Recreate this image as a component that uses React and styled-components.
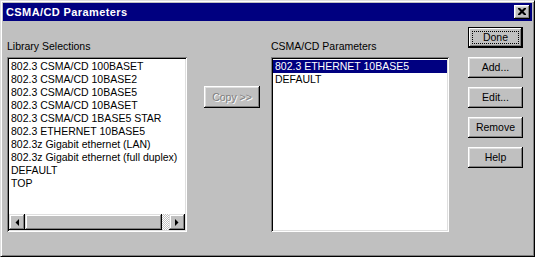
import React from 'react';
import styled, { createGlobalStyle } from 'styled-components';

const GlobalStyle = createGlobalStyle`
  html, body {
    margin: 0;
    padding: 0;
    background: #c0c0c0;
  }
  body {
    font-family: "Liberation Sans", Arial, sans-serif;
    font-size: 10.5px;
    color: #000;
  }
`;

const Window = styled.div`
  width: 535px;
  height: 257px;
  box-sizing: border-box;
  background: #c0c0c0;
  border: 1px solid;
  border-color: #dfdfdf #000 #000 #dfdfdf;
  box-shadow: inset 1px 1px #fff, inset -1px -1px #808080;
  padding: 2px;
  display: flex;
  flex-direction: column;
`;

const TitleBar = styled.div`
  height: 18px;
  background: #000080;
  color: #fff;
  display: flex;
  align-items: center;
  justify-content: space-between;
  padding: 0 2px 0 3px;
  font-weight: bold;
  font-size: 11px;
  letter-spacing: 0.4px;
`;

const CloseButton = styled.div`
  width: 16px;
  height: 14px;
  box-sizing: border-box;
  background: #c0c0c0;
  box-shadow: inset -1px -1px #000, inset 1px 1px #fff, inset -2px -2px #808080, inset 2px 2px #dfdfdf;
  display: flex;
  align-items: center;
  justify-content: center;
  padding: 0 1px 1px 0;
`;

const Content = styled.div`
  flex: 1;
  display: flex;
  padding-left: 4px;
`;

const Column = styled.div`
  width: ${(p) => p.$width}px;
  margin-left: ${(p) => p.$gap || 0}px;
  padding-top: ${(p) => p.$top || 0}px;
  display: flex;
  flex-direction: column;
`;

const Label = styled.div`
  height: 13px;
  line-height: 13px;
  margin-top: 19px;
  margin-bottom: 4px;
  white-space: nowrap;
`;

const ListBox = styled.div`
  height: 175px;
  box-sizing: border-box;
  background: #fff;
  box-shadow: inset 1px 1px #808080, inset -1px -1px #fff, inset 2px 2px #000, inset -2px -2px #dfdfdf;
  padding: 3px 2px 2px 2px;
  display: flex;
  flex-direction: column;
`;

const Items = styled.div`
  flex: 1;
  overflow: hidden;
`;

const Item = styled.div`
  height: 13px;
  line-height: 13px;
  padding-left: ${(p) => (p.$pad ? p.$pad : 2)}px;
  white-space: nowrap;
  background: ${(p) => (p.$selected ? '#000080' : 'transparent')};
  color: ${(p) => (p.$selected ? '#fff' : '#000')};
`;

const ScrollBar = styled.div`
  height: 16px;
  display: flex;
`;

const Arrow = styled.div`
  width: 16px;
  height: 16px;
  box-sizing: border-box;
  background: #c0c0c0;
  box-shadow: inset -1px -1px #000, inset 1px 1px #dfdfdf, inset -2px -2px #808080, inset 2px 2px #fff;
  display: flex;
  align-items: center;
  justify-content: center;
`;

const Thumb = styled(Arrow)`
  width: auto;
  flex: 1;
`;

const Track = styled.div`
  width: 7px;
  background: repeating-conic-gradient(#c0c0c0 0 25%, #fff 0 50%) 0 0 / 2px 2px;
`;

const Button = styled.div`
  position: relative;
  width: ${(p) => p.$width || 55}px;
  height: ${(p) => p.$height || 21}px;
  box-sizing: border-box;
  background: #c0c0c0;
  box-shadow: ${(p) =>
    p.$default
      ? 'inset 0 0 0 1px #000, inset -2px -2px #000, inset 2px 2px #fff, inset -3px -3px #808080'
      : 'inset -1px -1px #000, inset 1px 1px #fff, inset -2px -2px #808080, inset 2px 2px #dfdfdf'};
  display: flex;
  align-items: center;
  justify-content: center;
  padding-bottom: 1px;
  margin-bottom: ${(p) => p.$after || 0}px;
  color: ${(p) => (p.$disabled ? '#808080' : '#000')};
  text-shadow: ${(p) => (p.$disabled ? '1px 1px #fff' : 'none')};
  flex-shrink: 0;
`;

const FocusRing = styled.span`
  position: absolute;
  inset: 4px;
  border: 1px dotted #000;
`;

const ButtonText = styled.span`
  position: relative;
`;

const ArrowGlyph = ({ dir }) => (
  <svg width="4" height="7" viewBox="0 0 4 7">
    {dir === 'left' ? (
      <path d="M4 0 L4 7 L0.5 3.5 Z" fill="#000" />
    ) : (
      <path d="M0 0 L0 7 L3.5 3.5 Z" fill="#000" />
    )}
  </svg>
);

const libraryItems = [
  '802.3 CSMA/CD 100BASET',
  '802.3 CSMA/CD 10BASE2',
  '802.3 CSMA/CD 10BASE5',
  '802.3 CSMA/CD 10BASET',
  '802.3 CSMA/CD 1BASE5 STAR',
  '802.3 ETHERNET 10BASE5',
  '802.3z Gigabit ethernet (LAN)',
  '802.3z Gigabit ethernet (full duplex)',
  'DEFAULT',
  'TOP',
];

const paramItems = ['802.3 ETHERNET 10BASE5', 'DEFAULT'];

export default function App() {
  return (
    <>
      <GlobalStyle />
      <Window>
        <TitleBar>
          <span>CSMA/CD Parameters</span>
          <CloseButton>
            <svg width="8" height="7" viewBox="0 0 8 7">
              <path d="M0 0h2l2 2 2-2h2v1l-2.5 2.5L8 6v1H6L4 5 2 7H0V6l2.5-2.5L0 1z" fill="#000" />
            </svg>
          </CloseButton>
        </TitleBar>
        <Content>
          <Column $width={180}>
            <Label>Library Selections</Label>
            <ListBox>
              <Items>
                {libraryItems.map((t) => (
                  <Item key={t}>{t}</Item>
                ))}
              </Items>
              <ScrollBar>
                <Arrow>
                  <ArrowGlyph dir="left" />
                </Arrow>
                <Thumb />
                <Track />
                <Arrow>
                  <ArrowGlyph dir="right" />
                </Arrow>
              </ScrollBar>
            </ListBox>
          </Column>
          <Column $width={56} $gap={17} $top={65}>
            <Button $width={56} $height={22} $disabled>
              Copy &gt;&gt;
            </Button>
          </Column>
          <Column $width={178} $gap={11}>
            <Label>CSMA/CD Parameters</Label>
            <ListBox>
              <Items>
                {paramItems.map((t, i) => (
                  <Item key={t} $selected={i === 0} $pad={2}>
                    {t}
                  </Item>
                ))}
              </Items>
            </ListBox>
          </Column>
          <Column $width={55} $gap={19} $top={6}>
            <Button $default $after={9}>
              <FocusRing />
              <ButtonText>Done</ButtonText>
            </Button>
            <Button $after={9}>Add...</Button>
            <Button $after={9}>Edit...</Button>
            <Button $after={9}>Remove</Button>
            <Button>Help</Button>
          </Column>
        </Content>
      </Window>
    </>
  );
}
